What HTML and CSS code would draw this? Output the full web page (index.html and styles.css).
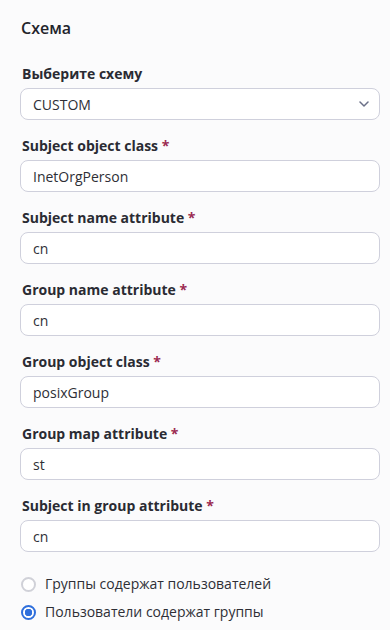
FILE: index.html
```html
<!DOCTYPE html>
<html lang="ru">
<head>
  <meta charset="UTF-8" />
  <title>Схема</title>
  <link rel="stylesheet" href="styles.css">
</head>
<body>
  <div class="panel">
    <h2>Схема</h2>

    <div class="field">
      <label for="schema">Выберите схему</label>
      <div class="select-wrap">
        <select id="schema">
          <option>CUSTOM</option>
        </select>
        <svg class="chevron" width="10" height="6" viewBox="0 0 10 6"><path d="M1 1l4 4 4-4" fill="none" stroke="#6b7088" stroke-width="1.5" stroke-linecap="round" stroke-linejoin="round"/></svg>
      </div>
    </div>

    <div class="field">
      <label for="subjClass">Subject object class <span class="req">*</span></label>
      <input type="text" id="subjClass" value="InetOrgPerson" />
    </div>

    <div class="field">
      <label for="subjName">Subject name attribute <span class="req">*</span></label>
      <input type="text" id="subjName" value="cn" />
    </div>

    <div class="field">
      <label for="groupName">Group name attribute <span class="req">*</span></label>
      <input type="text" id="groupName" value="cn" />
    </div>

    <div class="field">
      <label for="groupClass">Group object class <span class="req">*</span></label>
      <input type="text" id="groupClass" value="posixGroup" />
    </div>

    <div class="field">
      <label for="groupMap">Group map attribute <span class="req">*</span></label>
      <input type="text" id="groupMap" value="st" />
    </div>

    <div class="field">
      <label for="subjInGroup">Subject in group attribute <span class="req">*</span></label>
      <input type="text" id="subjInGroup" value="cn" />
    </div>

    <div class="radios">
      <label class="radio"><input type="radio" name="mode" /> <span>Группы содержат пользователей</span></label>
      <label class="radio"><input type="radio" name="mode" checked /> <span>Пользователи содержат группы</span></label>
    </div>
  </div>
</body>
</html>
```

FILE: styles.css
```css
* {
  box-sizing: border-box;
}

body {
  margin: 0;
  font-family: 'Open Sans', 'Noto Sans', sans-serif;
  background: #fbfbfc;
  color: #2a2b33;
}

.panel {
  padding: 17px 10px 0 20px;
}

h2 {
  margin: 0 0 25px 1px;
  font-size: 16px;
  font-weight: 600;
  line-height: 22px;
  color: #23242b;
}

.field {
  display: flex;
  flex-direction: column;
  gap: 4px;
  margin-bottom: 16px;
}

.field label {
  font-size: 14px;
  font-weight: 700;
  line-height: 20px;
  padding-left: 2px;
  color: #2a2b33;
}

.req {
  color: #9b2b52;
}

input[type="text"], select {
  width: 100%;
  height: 32px;
  padding: 0 12px;
  border: 1px solid #cfd0dc;
  border-radius: 8px;
  background: #fff;
  font-family: inherit;
  font-size: 14px;
  color: #2e2f36;
  outline: none;
}

.select-wrap {
  position: relative;
}

select {
  appearance: none;
  -webkit-appearance: none;
}

.chevron {
  position: absolute;
  right: 11px;
  top: 13px;
  pointer-events: none;
}

.radios {
  display: flex;
  flex-direction: column;
  gap: 8px;
  padding-top: 6px;
}

.radio {
  display: flex;
  align-items: center;
  gap: 9px;
  font-size: 14px;
  line-height: 20px;
  color: #2e2f36;
}

.radio input {
  appearance: none;
  -webkit-appearance: none;
  margin: 0 0 0 1px;
  width: 15px;
  height: 15px;
  border: 2px solid #d0d1d8;
  border-radius: 50%;
  background: #fff;
}

.radio input:checked {
  border: 2px solid #2f6fdc;
  background: radial-gradient(circle, #2f6fdc 0 3.5px, #fff 4px);
}
```
